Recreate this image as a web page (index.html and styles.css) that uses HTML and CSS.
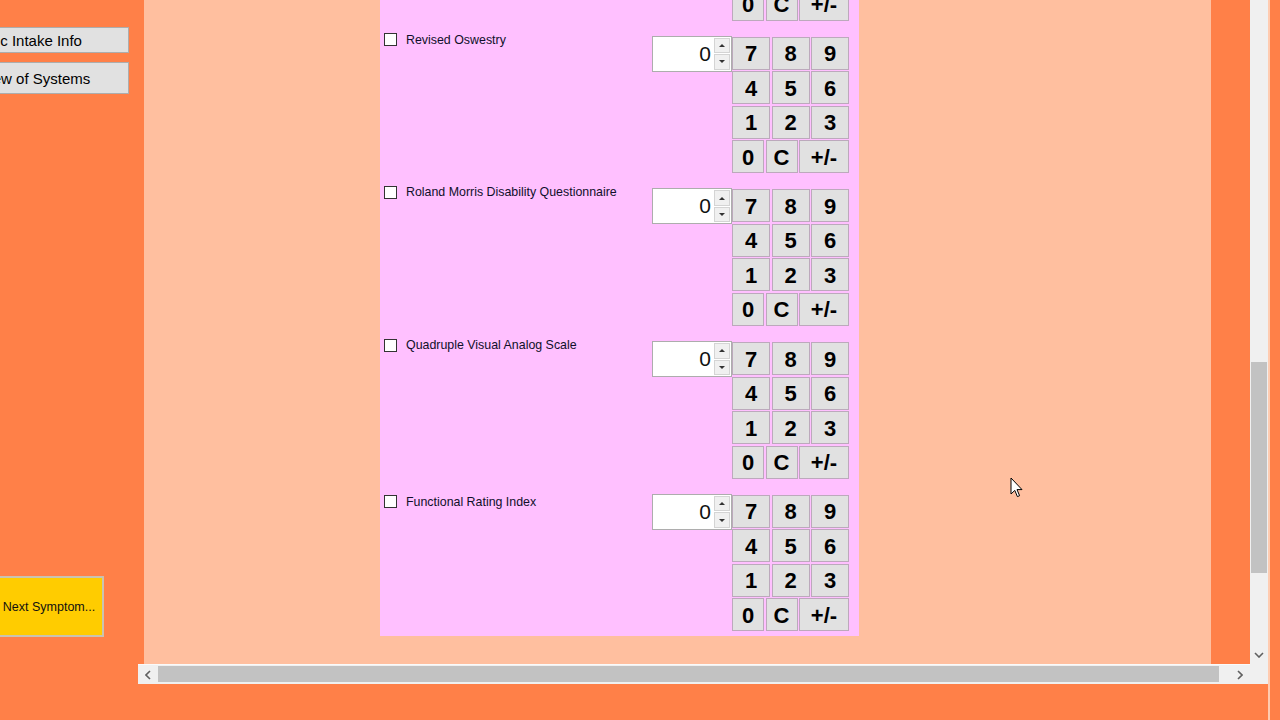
FILE: index.html
```html
<!DOCTYPE html>
<html>
<head>
    <link rel="stylesheet" href="styles.css">
</head>
<body>
    <div class="app">
        <nav class="sidebar">
            <button class="nav-btn">Basic Intake Info</button>
            <button class="nav-btn tall">Review of Systems</button>
            <button class="next-btn">Next Symptom...</button>
        </nav>

        <div class="form-frame">
            <div class="viewport">
                <div class="content">
                    <div class="measures">

                        <div class="measure">
                            <label class="choice"><span class="box"></span>Neck Disability Index</label>
                            <div class="spin"><span class="spin-value">0</span><div class="spin-arrows"><span class="up"></span><span class="down"></span></div></div>
                            <div class="keypad">
                                <div class="key-row"><button class="key">7</button><button class="key">8</button><button class="key">9</button></div>
                                <div class="key-row"><button class="key">4</button><button class="key">5</button><button class="key">6</button></div>
                                <div class="key-row"><button class="key">1</button><button class="key">2</button><button class="key">3</button></div>
                                <div class="key-row"><button class="key narrow">0</button><button class="key narrow">C</button><button class="key wide">+/-</button></div>
                            </div>
                        </div>

                        <div class="measure">
                            <label class="choice"><span class="box"></span>Revised Oswestry</label>
                            <div class="spin"><span class="spin-value">0</span><div class="spin-arrows"><span class="up"></span><span class="down"></span></div></div>
                            <div class="keypad">
                                <div class="key-row"><button class="key">7</button><button class="key">8</button><button class="key">9</button></div>
                                <div class="key-row"><button class="key">4</button><button class="key">5</button><button class="key">6</button></div>
                                <div class="key-row"><button class="key">1</button><button class="key">2</button><button class="key">3</button></div>
                                <div class="key-row"><button class="key narrow">0</button><button class="key narrow">C</button><button class="key wide">+/-</button></div>
                            </div>
                        </div>

                        <div class="measure">
                            <label class="choice"><span class="box"></span>Roland Morris Disability Questionnaire</label>
                            <div class="spin"><span class="spin-value">0</span><div class="spin-arrows"><span class="up"></span><span class="down"></span></div></div>
                            <div class="keypad">
                                <div class="key-row"><button class="key">7</button><button class="key">8</button><button class="key">9</button></div>
                                <div class="key-row"><button class="key">4</button><button class="key">5</button><button class="key">6</button></div>
                                <div class="key-row"><button class="key">1</button><button class="key">2</button><button class="key">3</button></div>
                                <div class="key-row"><button class="key narrow">0</button><button class="key narrow">C</button><button class="key wide">+/-</button></div>
                            </div>
                        </div>

                        <div class="measure">
                            <label class="choice"><span class="box"></span>Quadruple Visual Analog Scale</label>
                            <div class="spin"><span class="spin-value">0</span><div class="spin-arrows"><span class="up"></span><span class="down"></span></div></div>
                            <div class="keypad">
                                <div class="key-row"><button class="key">7</button><button class="key">8</button><button class="key">9</button></div>
                                <div class="key-row"><button class="key">4</button><button class="key">5</button><button class="key">6</button></div>
                                <div class="key-row"><button class="key">1</button><button class="key">2</button><button class="key">3</button></div>
                                <div class="key-row"><button class="key narrow">0</button><button class="key narrow">C</button><button class="key wide">+/-</button></div>
                            </div>
                        </div>

                        <div class="measure">
                            <label class="choice"><span class="box"></span>Functional Rating Index</label>
                            <div class="spin"><span class="spin-value">0</span><div class="spin-arrows"><span class="up"></span><span class="down"></span></div></div>
                            <div class="keypad">
                                <div class="key-row"><button class="key">7</button><button class="key">8</button><button class="key">9</button></div>
                                <div class="key-row"><button class="key">4</button><button class="key">5</button><button class="key">6</button></div>
                                <div class="key-row"><button class="key">1</button><button class="key">2</button><button class="key">3</button></div>
                                <div class="key-row"><button class="key narrow">0</button><button class="key narrow">C</button><button class="key wide">+/-</button></div>
                            </div>
                        </div>

                    </div>
                </div>
            </div>

            <!-- scrollbars of the form panel -->
            <div class="vscroll">
                <div class="vthumb"></div>
                <div class="arrow">
                    <svg width="10" height="6" viewBox="0 0 10 6"><polyline points="1,1 5,5 9,1" fill="none" stroke="#606060" stroke-width="1.6"/></svg>
                </div>
            </div>
            <div class="hscroll">
                <div class="arrow">
                    <svg width="6" height="10" viewBox="0 0 6 10"><polyline points="5,1 1,5 5,9" fill="none" stroke="#606060" stroke-width="1.6"/></svg>
                </div>
                <div class="hthumb"></div>
                <div class="arrow end">
                    <svg width="6" height="10" viewBox="0 0 6 10"><polyline points="1,1 5,5 1,9" fill="none" stroke="#606060" stroke-width="1.6"/></svg>
                </div>
            </div>
            <div class="corner"></div>
        </div>

        <div class="edge"></div>
    </div>

    <svg class="cursor" width="14" height="22" viewBox="0 0 14 22">
        <path d="M1,1 L1,17 L4.8,13.4 L7.4,19.6 L9.6,18.7 L7,12.6 L12,12.6 Z" fill="#fff" stroke="#000" stroke-width="1" stroke-linejoin="round"/>
    </svg>
</body>
</html>
```

FILE: styles.css
```css
body {
    margin: 0;
    background: #FF8048;
    font-family: "Liberation Sans", Arial, sans-serif;
    overflow: hidden;
}
.app {
    display: flex;
    height: 720px;
}
.sidebar {
    width: 138px;
    flex: none;
    display: flex;
    flex-direction: column;
    align-items: flex-start;
    padding-top: 27px;
    box-sizing: border-box;
    overflow: hidden;
}
.nav-btn {
    width: 205px;
    height: 26px;
    margin-left: -76px;
    padding: 0;
    background: #E1E1E1;
    border: 1px solid #ADADAD;
    font-family: "Liberation Sans", Arial, sans-serif;
    font-size: 15px;
    color: #000;
}
.nav-btn.tall {
    height: 32px;
    margin-top: 9px;
}
.next-btn {
    width: 110px;
    height: 61px;
    margin-left: -6px;
    margin-top: 482px;
    padding: 0;
    background: #FFCC00;
    border: 2px solid #C9C3B0;
    font-family: "Liberation Sans", Arial, sans-serif;
    font-size: 12.5px;
    color: #111;
}
.form-frame {
    width: 1130px;
    height: 684px;
    flex: none;
    display: grid;
    grid-template-columns: 1112px 18px;
    grid-template-rows: 664px 20px;
}
.viewport {
    padding-left: 6px;
    overflow: hidden;
}
.content {
    width: 1067px;
    height: 100%;
    box-sizing: border-box;
    padding-left: 236px;
    background: #FFBF9F;
    display: flex;
    align-items: flex-start;
}
.measures {
    width: 479px;
    margin-top: -121px;
    padding-bottom: 5px;
    background: #FFC0FF;
}
.measure {
    display: flex;
    align-items: flex-start;
    height: 152.7px;
    padding-left: 4px;
}
.measure:last-child {
    height: auto;
}
.choice {
    width: 268px;
    display: flex;
    align-items: center;
    gap: 9px;
    margin-top: 1px;
    font-size: 12.4px;
    color: #10102a;
    line-height: 14px;
}
.measure:last-child .choice {
    margin-top: 5px;
}
.box {
    width: 13px;
    height: 13px;
    box-sizing: border-box;
    border: 1px solid #333;
    background: #fff;
    flex: none;
}
.spin {
    width: 80px;
    height: 36px;
    margin-top: 4px;
    box-sizing: border-box;
    border: 1px solid #ADADAD;
    background: #fff;
    display: flex;
    justify-content: flex-end;
}
.spin-value {
    font-size: 21px;
    line-height: 34px;
    padding-right: 3px;
    color: #111;
}
.spin-arrows {
    width: 16px;
    display: flex;
    flex-direction: column;
    gap: 1px;
    padding: 1px 1px 1px 0;
}
.spin-arrows span {
    flex: 1;
    display: flex;
    align-items: center;
    justify-content: center;
    background: #F0F0F0;
    border: 1px solid #D4D4D4;
}
.spin-arrows .up::after {
    content: "";
    border-left: 3px solid transparent;
    border-right: 3px solid transparent;
    border-bottom: 3px solid #333;
}
.spin-arrows .down::after {
    content: "";
    border-left: 3px solid transparent;
    border-right: 3px solid transparent;
    border-top: 3px solid #333;
}
.keypad {
    width: 117px;
    margin-top: 5px;
    display: flex;
    flex-direction: column;
    gap: 1.5px;
}
.key-row {
    display: flex;
    gap: 1.5px;
}
.key {
    width: 38px;
    height: 33px;
    box-sizing: border-box;
    padding: 2px 0 0;
    background: #E1E1E1;
    border: 1px solid #BCA9BC;
    font-family: "Liberation Sans", Arial, sans-serif;
    font-weight: bold;
    font-size: 22px;
    color: #000;
}
.key.narrow {
    width: 32px;
}
.key.wide {
    width: 50px;
}
.vscroll {
    background: #F0F0F0;
    display: flex;
    flex-direction: column;
}
.vthumb {
    height: 211px;
    margin: 362px 1px 0;
    background: #C2C2C2;
}
.vscroll .arrow {
    margin-top: auto;
    height: 18px;
    display: flex;
    align-items: center;
    justify-content: center;
}
.hscroll {
    background: #F0F0F0;
    border-top: 1px solid #FAFAFA;
    display: flex;
}
.hscroll .arrow {
    width: 20px;
    display: flex;
    align-items: center;
    justify-content: center;
}
.hscroll .arrow.end {
    margin-left: auto;
}
.hthumb {
    width: 1061px;
    margin: 1px 0 2px;
    background: #C2C2C2;
}
.corner {
    background: #F0F0F0;
}
.edge {
    flex: 1;
    border-left: 2px solid #FFCBB0;
}
.cursor {
    position: absolute;
    left: 1010px;
    top: 477px;
}
```
